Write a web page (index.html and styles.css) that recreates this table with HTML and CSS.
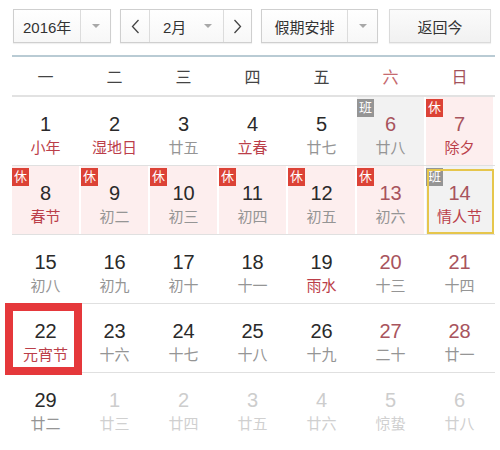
FILE: index.html
```html
<!DOCTYPE html>
<html lang="zh-CN">
<head>
<meta charset="utf-8">
<title>万年历</title>
<link rel="stylesheet" href="styles.css">
</head>
<body>
<div class="cal">
  <div class="toolbar">
    <div class="sel year"><span class="label">2016年</span><span class="drop"><i class="caret"></i></span></div>
    <div class="sel month">
      <span class="nav"><svg width="9" height="15" viewBox="0 0 9 15"><path d="M7.5 1 L1.5 7.5 L7.5 14" fill="none" stroke="#444" stroke-width="1.3"/></svg></span>
      <span class="mid"><span class="label">2月</span><i class="caret"></i></span>
      <span class="nav"><svg width="9" height="15" viewBox="0 0 9 15"><path d="M1.5 1 L7.5 7.5 L1.5 14" fill="none" stroke="#444" stroke-width="1.3"/></svg></span>
    </div>
    <div class="sel holiday"><span class="label">假期安排</span><span class="drop"><i class="caret"></i></span></div>
    <div class="btn">返回今</div>
  </div>

  <div class="week">
    <div>一</div><div>二</div><div>三</div><div>四</div><div>五</div><div class="sat">六</div><div class="sun">日</div>
  </div>

  <div class="row">
    <div class="day"><b>1</b><span class="fest">小年</span></div>
    <div class="day"><b>2</b><span class="fest">湿地日</span></div>
    <div class="day"><b>3</b><span>廿五</span></div>
    <div class="day"><b>4</b><span class="fest">立春</span></div>
    <div class="day"><b>5</b><span>廿七</span></div>
    <div class="day work wkend"><em class="tag ban">班</em><b>6</b><span>廿八</span></div>
    <div class="day rest wkend"><em class="tag xiu">休</em><b>7</b><span class="fest">除夕</span></div>
  </div>

  <div class="row">
    <div class="day rest"><em class="tag xiu">休</em><b>8</b><span class="fest">春节</span></div>
    <div class="day rest"><em class="tag xiu">休</em><b>9</b><span>初二</span></div>
    <div class="day rest"><em class="tag xiu">休</em><b>10</b><span>初三</span></div>
    <div class="day rest"><em class="tag xiu">休</em><b>11</b><span>初四</span></div>
    <div class="day rest"><em class="tag xiu">休</em><b>12</b><span>初五</span></div>
    <div class="day rest wkend"><em class="tag xiu">休</em><b>13</b><span>初六</span></div>
    <div class="day work wkend selected"><em class="tag ban">班</em><b>14</b><span class="fest">情人节</span></div>
  </div>

  <div class="row">
    <div class="day"><b>15</b><span>初八</span></div>
    <div class="day"><b>16</b><span>初九</span></div>
    <div class="day"><b>17</b><span>初十</span></div>
    <div class="day"><b>18</b><span>十一</span></div>
    <div class="day"><b>19</b><span class="fest">雨水</span></div>
    <div class="day wkend"><b>20</b><span>十三</span></div>
    <div class="day wkend"><b>21</b><span>十四</span></div>
  </div>

  <div class="row">
    <div class="day today"><b>22</b><span class="fest">元宵节</span><i class="mark"></i></div>
    <div class="day"><b>23</b><span>十六</span></div>
    <div class="day"><b>24</b><span>十七</span></div>
    <div class="day"><b>25</b><span>十八</span></div>
    <div class="day"><b>26</b><span>十九</span></div>
    <div class="day wkend"><b>27</b><span>二十</span></div>
    <div class="day wkend"><b>28</b><span>廿一</span></div>
  </div>

  <div class="row last">
    <div class="day"><b>29</b><span>廿二</span></div>
    <div class="day other"><b>1</b><span>廿三</span></div>
    <div class="day other"><b>2</b><span>廿四</span></div>
    <div class="day other"><b>3</b><span>廿五</span></div>
    <div class="day other"><b>4</b><span>廿六</span></div>
    <div class="day other"><b>5</b><span>惊蛰</span></div>
    <div class="day other"><b>6</b><span>廿八</span></div>
  </div>
</div>
</body>
</html>
```

FILE: styles.css
```css
* { box-sizing: border-box; }

body {
  margin: 0;
  background: #fff;
  font-family: "Liberation Sans", "Noto Sans CJK SC", sans-serif;
  color: #333;
}

.cal {
  margin-left: 12px;
  width: 483px;
  padding-top: 9px;
}

.toolbar {
  display: flex;
  height: 34px;
  margin-left: 1px;
}

.sel, .btn {
  display: flex;
  align-items: stretch;
  height: 34px;
  border: 1px solid #cfcfcf;
  background: linear-gradient(#ffffff, #f7f7f7);
  font-size: 15px;
  color: #333;
  box-shadow: 0 1px 1px rgba(0,0,0,0.06);
}

.sel .label {
  display: flex;
  align-items: center;
  justify-content: center;
}

.drop {
  display: flex;
  align-items: center;
  justify-content: center;
  width: 30px;
  border-left: 1px solid #dcdcdc;
}

.caret {
  display: block;
  width: 0;
  height: 0;
  border-left: 4px solid transparent;
  border-right: 4px solid transparent;
  border-top: 4px solid #a8a8a8;
}

.year { width: 98px; }
.year .label { width: 67px; }

.month { width: 132px; margin-left: 9px; }
.month .nav {
  width: 28px;
  display: flex;
  align-items: center;
  justify-content: center;
}
.month .nav:last-child { border-left: 1px solid #dcdcdc; }
.month .mid {
  flex: 1;
  display: flex;
  align-items: center;
  border-left: 1px solid #dcdcdc;
  padding-left: 13px;
  gap: 18px;
}

.holiday { width: 117px; margin-left: 9px; }
.holiday .label { width: 86px; }

.btn {
  width: 102px;
  margin-left: 11px;
  align-items: center;
  justify-content: center;
  background: linear-gradient(#fbfbfb, #f1f1f1);
  border-color: #dadada;
}

.week {
  margin-top: 12px;
  display: grid;
  grid-template-columns: repeat(7, 67px);
  column-gap: 2px;
  height: 42px;
  border-top: 2px solid #b9cbd4;
  border-bottom: 2px solid #e2e2e2;
  align-items: center;
  font-size: 16px;
  color: #444;
}
.week div { text-align: center; }
.week .sat { color: #c66a70; }
.week .sun { color: #a2525a; }

.row {
  display: grid;
  grid-template-columns: repeat(7, 67px);
  column-gap: 2px;
  height: 69px;
  border-bottom: 1px solid #e0e0e0;
}
.row.last { border-bottom: none; }

.day {
  position: relative;
  display: flex;
  flex-direction: column;
  align-items: center;
  padding-top: 16px;
}

.day b {
  font-weight: normal;
  font-size: 20px;
  line-height: 22px;
  color: #2a2a2a;
}

.day span {
  margin-top: 3px;
  font-size: 15px;
  line-height: 20px;
  color: #959595;
}

.day span.fest { color: #bb3e49; }

.wkend b { color: #a8545d; }

.rest { background: #fdeeee; }
.work { background: #f2f2f2; }

.other b { color: #cdcdcd; }
.other span { color: #d0d0d0; }

.tag {
  position: absolute;
  left: 0;
  top: 2px;
  width: 17px;
  height: 18px;
  font-style: normal;
  font-size: 13px;
  line-height: 18px;
  text-align: center;
  color: #fff;
}
.xiu { background: #dc4236; }
.ban { background: #959595; }

.selected::after {
  content: "";
  position: absolute;
  left: 1px;
  right: -1px;
  top: 3px;
  bottom: 0;
  border: 2px solid #e6c64c;
}

.today .mark {
  position: absolute;
  left: -7px;
  right: -3px;
  top: -1px;
  bottom: -3px;
  border: 8px solid #e5383b;
}
```
